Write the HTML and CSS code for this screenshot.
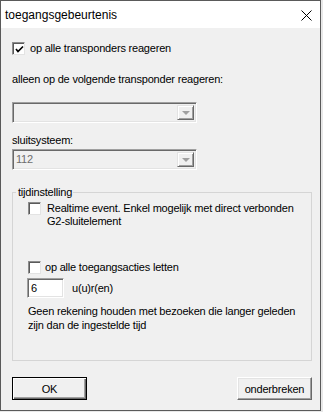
FILE: index.html
```html
<!DOCTYPE html>
<html lang="nl">
<head>
  <meta charset="UTF-8">
  <meta name="viewport" content="width=device-width, initial-scale=1.0">
  <title>toegangsgebeurtenis</title>
  <link rel="stylesheet" href="styles.css">
</head>
<body>
  <div class="dialog">
    <div class="titlebar">
      <span class="title">toegangsgebeurtenis</span>
      <svg class="close" width="11" height="11" viewBox="0 0 11 11">
        <path d="M0.5 0.5 L10.5 10.5 M10.5 0.5 L0.5 10.5" stroke="#000" stroke-width="1" fill="none"/>
      </svg>
    </div>
    <div class="content">
      <div class="check-row first">
        <span class="checkbox checked">
          <svg width="9" height="9" viewBox="0 0 9 9"><path d="M1 4 L3 6.5 L8 1.5" stroke="#000" stroke-width="1.7" fill="none"/></svg>
        </span>
        <span>op alle transponders reageren</span>
      </div>

      <div class="label label-transp">alleen op de volgende transponder reageren:</div>
      <div class="combo">
        <span class="combo-value"></span>
        <span class="combo-btn"><span class="arrow"></span></span>
      </div>

      <div class="label label-sys">sluitsysteem:</div>
      <div class="combo combo-sys">
        <span class="combo-value">112</span>
        <span class="combo-btn"><span class="arrow"></span></span>
      </div>

      <div class="group">
        <span class="legend">tijdinstelling</span>
        <div class="check-row realtime">
          <span class="checkbox"></span>
          <span>Realtime event. Enkel mogelijk met direct verbonden<br>G2-sluitelement</span>
        </div>
        <div class="check-row all-actions">
          <span class="checkbox"></span>
          <span>op alle toegangsacties letten</span>
        </div>
        <div class="hours-row">
          <span class="textbox">6</span>
          <span>u(u)r(en)</span>
        </div>
        <p class="note">Geen rekening houden met bezoeken die langer geleden<br>zijn dan de ingestelde tijd</p>
      </div>

      <div class="buttons">
        <button class="btn default">OK</button>
        <button class="btn">onderbreken</button>
      </div>
    </div>
  </div>
</body>
</html>
```

FILE: styles.css
```css
body {
  margin: 0;  padding: 0;  background-color: #e8e8e8;  color: #000;
  font-family: "Liberation Sans", Arial, sans-serif;  font-size: 11px;  letter-spacing: -0.2px;
}
.dialog {
  box-sizing: border-box;  width: 321px;  height: 411px;
  border: 1px solid #5a5a5a;  background-color: #f0f0f0;  white-space: nowrap;
}
.titlebar {
  height: 27px;  background-color: #fff;  display: flex;  align-items: center;
  justify-content: space-between;  padding: 0 8px 0 4px;
}
.title {  font-size: 12px;  letter-spacing: 0;  }
.close {  margin-top: 2px;  }
.content {  padding: 0 8px 0 11px;  }

.check-row {  display: flex;  align-items: flex-start;  gap: 5px;  line-height: 13px;  }
.check-row.first {  margin-top: 14px;  }
.checkbox {
  box-sizing: border-box;  width: 13px;  height: 13px;  flex: none;  background-color: #fff;
  border: 1px solid;  border-color: #8c8c8c #e3e3e3 #e3e3e3 #8c8c8c;
  box-shadow: inset 1px 1px 0 #5a5a5a;
  display: flex;  align-items: center;  justify-content: center;
}
.checkbox svg {  margin: 1px 0 0 1px;  }

.label {  line-height: 13px;  }
.label-transp {  margin-top: 18px;  }
.label-sys {  margin-top: 11px;  }

.combo {
  box-sizing: border-box;  width: 185px;  height: 21px;  margin-top: 16px;
  display: flex;  align-items: stretch;  background-color: #f0f0f0;
  border: 1px solid;  border-color: #a0a0a0 #fff #fff #a0a0a0;
  box-shadow: inset 1px 1px 0 #696969, inset -1px -1px 0 #e3e3e3;
  padding: 2px;
}
.combo-sys {  margin-top: 2px;  }
.combo-value {  flex: 1;  color: #6d6d6d;  line-height: 15px;  padding-left: 1px;  }
.combo-btn {
  box-sizing: border-box;  width: 17px;  display: flex;  align-items: center;  justify-content: center;
  border: 1px solid;  border-color: #e3e3e3 #696969 #696969 #e3e3e3;
  box-shadow: inset 1px 1px 0 #fff, inset -1px -1px 0 #a0a0a0;
}
.arrow {
  width: 0;  height: 0;  border-left: 4px solid transparent;  border-right: 4px solid transparent;
  border-top: 4px solid #a0a0a0;  margin-top: 1px;
}

.group {
  margin-top: 22px;  border: 1px solid #d5d5d5;  height: 169px;  box-sizing: border-box;
  padding: 0 8px 0 15px;
}
.legend {
  display: table;  margin: -7px 0 0 -12px;  padding: 0 1px 0 2px;  background-color: #f0f0f0;
  line-height: 13px;
}
.realtime {  margin-top: 3px;  gap: 6px;  }
.all-actions {  margin-top: 33px;  gap: 4px;  }
.hours-row {  display: flex;  align-items: center;  gap: 8px;  margin: 4px 0 0 -1px;  }
.textbox {
  box-sizing: border-box;  width: 37px;  height: 20px;  background-color: #fff;
  border: 1px solid;  border-color: #a0a0a0 #fff #fff #a0a0a0;
  box-shadow: inset 1px 1px 0 #696969, inset -1px -1px 0 #e3e3e3;
  padding: 0 3px;  line-height: 18px;
}
.note {  margin: 6px 0 0;  line-height: 14px;  }

.buttons {  display: flex;  justify-content: space-between;  margin-top: 16px;  }
.btn {
  box-sizing: border-box;  width: 75px;  height: 23px;  padding: 0;
  font-family: "Liberation Sans", Arial, sans-serif;  font-size: 11px;  letter-spacing: -0.2px;  color: #000;
  background-color: #f0f0f0;  border: 1px solid;  border-color: #fff #696969 #696969 #fff;
  box-shadow: inset -1px -1px 0 #a0a0a0, inset 1px 1px 0 #e3e3e3;
}
.btn.default {
  border: 1px solid #000;
  box-shadow: inset 1px 1px 0 #fff, inset -1px -1px 0 #696969, inset -2px -2px 0 #a0a0a0;
}
```
